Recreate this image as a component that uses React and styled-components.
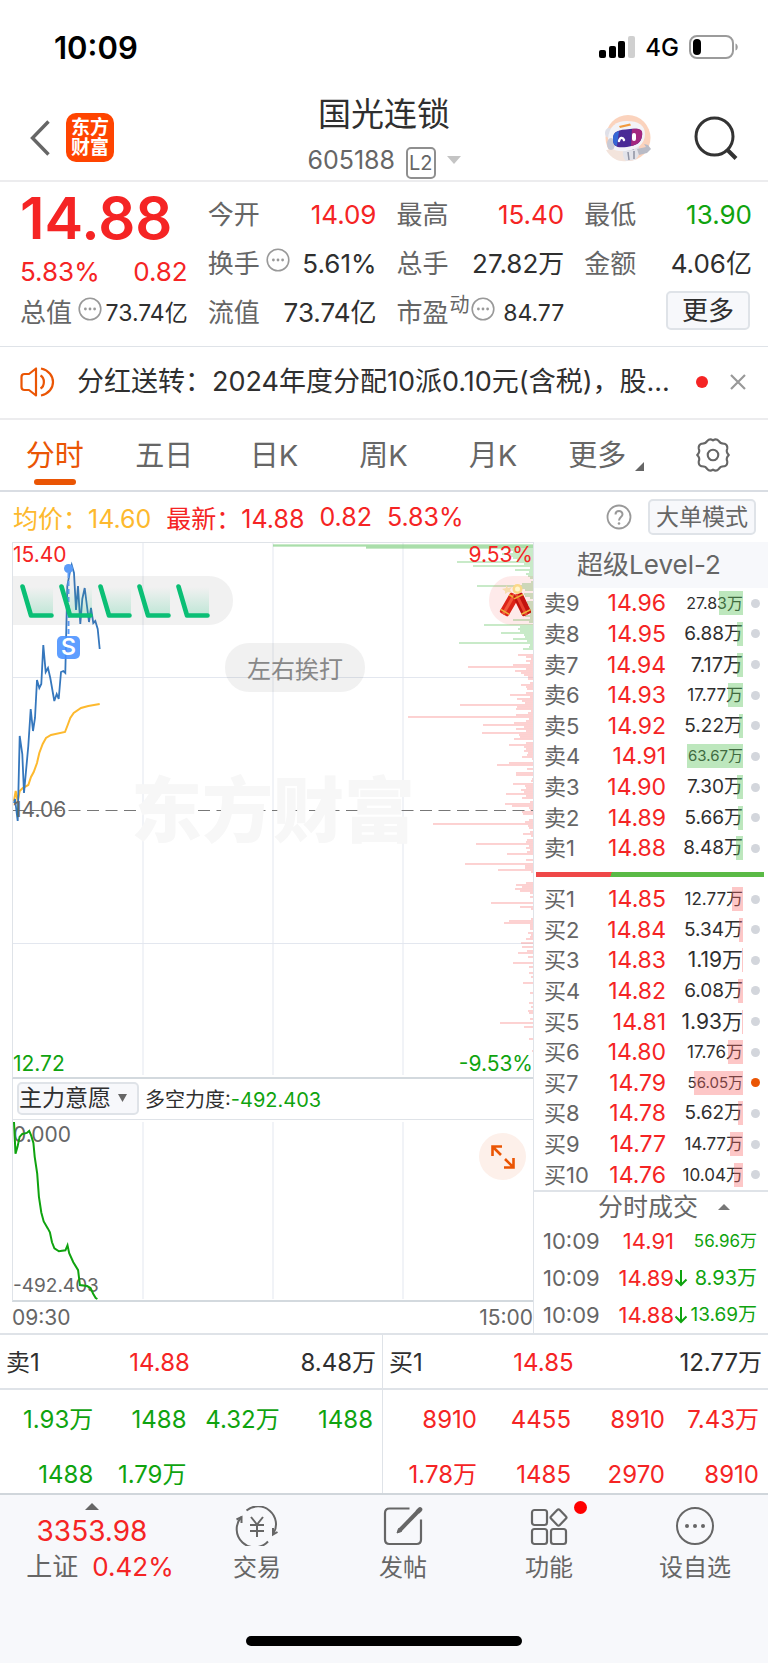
import React from 'react'
import styled, { createGlobalStyle, ThemeProvider } from 'styled-components'

const theme = {
  up: '#f52424',
  down: '#0fa30f',
  brand: '#ea5504',
  text: '#2f2f2f',
  label: '#666666',
  line: '#dfe3e8',
  panel: '#f7f8fb',
  average: '#fdb92e',
}

const GlobalStyle = createGlobalStyle`
  * {
    box-sizing: border-box;
  }

  body {
    margin: 0;
    background: #fff;
    color: #2f2f2f;
    font-family: Inter, 'Noto Sans CJK SC', sans-serif;
  }

  button, select {
    font: inherit;
    color: inherit;
    background: none;
    border: 0;
    padding: 0;
    margin: 0;
    cursor: pointer;
  }

  a {
    color: inherit;
    text-decoration: none;
  }

  svg {
    display: block;
    flex: none;
  }
`

const toneColor = ({ theme, $tone }) => theme[$tone] || theme.text

const Tone = styled.span`
  color: ${toneColor};
`

/* ---------- status bar ---------- */

const StatusBar = styled.div`
  display: flex;
  justify-content: space-between;
  align-items: center;
  height: 94px;
  padding: 0 29px 0 54px;
  color: #000;
`

const Clock = styled.span`
  font-size: 31px;
  font-weight: 600;
`

const StatusIcons = styled.div`
  display: flex;
  align-items: center;
  gap: 10px;
  font-size: 24px;
  font-weight: 500;
`

/* ---------- header ---------- */

const Header = styled.header`
  display: grid;
  grid-template-columns: 1fr auto 1fr;
  align-items: center;
  height: 88px;
  padding: 0 30px;
  border-bottom: 2px solid #ececee;
`

const HeaderSide = styled.div`
  display: flex;
  align-items: center;
  justify-content: ${props => (props.$end ? 'flex-end' : 'flex-start')};
  gap: ${props => (props.$end ? '42px' : '16px')};
  padding-bottom: 4px;
`

const Logo = styled.a`
  display: grid;
  place-content: center;
  width: 48px;
  height: 49px;
  border-radius: 10px;
  background: #ff4400;
  color: #fff;
  font-size: 19px;
  font-weight: 700;
  line-height: 20px;
  text-align: center;
`

const Title = styled.div`
  display: flex;
  flex-direction: column;
  align-items: center;
  gap: 7px;
  padding-bottom: 6px;
`

const StockName = styled.h1`
  margin: 0;
  font-size: 33px;
  font-weight: 400;
  line-height: 40px;
`

const StockCode = styled.button`
  display: flex;
  align-items: center;
  gap: 11px;
  color: ${props => props.theme.label};
  font-size: 25px;
  line-height: 32px;
`

const LevelTag = styled.span`
  margin-top: 6px;
  padding: 0 1px;
  border: 2px solid #8f8f8f;
  border-radius: 5px;
  font-size: 20px;
  line-height: 28px;
`

/* ---------- quote ---------- */

const Quote = styled.section`
  display: grid;
  grid-template-columns: 167fr 168fr 167fr 167fr;
  column-gap: 20px;
  height: 165px;
  padding: 8px 16px 10px 20px;
  border-bottom: 1px solid ${props => props.theme.line};
`

const QuoteColumn = styled.div`
  display: grid;
  grid-template-rows: repeat(3, 49px);
`

const Price = styled.div`
  grid-row: span 2;
  display: flex;
  flex-direction: column;
  justify-content: space-between;
  color: ${props => props.theme.up};
`

const PriceNow = styled.strong`
  font-size: 58px;
  font-weight: 600;
  line-height: 56px;
`

const Between = styled.div`
  display: flex;
  justify-content: space-between;
  align-items: center;
  font-size: 26px;
  line-height: 32px;
  white-space: nowrap;
`

const FieldName = styled.span`
  display: flex;
  align-items: center;
  gap: 6px;
  color: ${props => props.theme.label};
  font-size: 26px;

  svg {
    margin-bottom: 8px;
  }
`

const FieldValue = styled.span`
  color: ${toneColor};
  font-size: ${props => (props.$small ? '23px' : '26px')};
`

const Raised = styled.sup`
  margin: 0 -5px 16px -5px;
  font-size: 20px;
  line-height: 20px;
`

const OutlineButton = styled.button`
  padding: 0 ${props => (props.$wide ? '14px' : '6px')};
  border: 2px solid ${props => props.theme.line};
  border-radius: 5px;
  background: ${props => props.theme.panel};
  color: ${props => (props.$wide ? props.theme.text : props.theme.label)};
  font-size: ${props => (props.$wide ? '26px' : '23px')};
  line-height: ${props => (props.$wide ? '35px' : '32px')};
`

const MoreCell = styled.div`
  display: flex;
  justify-content: flex-end;
  align-items: center;
  padding: 0 2px 4px 0;
`

/* ---------- notice ---------- */

const Notice = styled.section`
  display: flex;
  align-items: center;
  height: 73px;
  padding: 0 22px 2px 20px;
  border-bottom: 2px solid #ececee;
`

const NoticeText = styled.a`
  flex: 1;
  margin-left: 22px;
  white-space: nowrap;
  font-size: 27px;
  line-height: 36px;
`

const Dot = styled.i`
  flex: none;
  width: ${props => props.$size}px;
  height: ${props => props.$size}px;
  border-radius: 50%;
  background: ${props => props.$color};
`

const CloseButton = styled.button`
  margin-left: 22px;
`

/* ---------- tabs ---------- */

const Tabs = styled.nav`
  display: grid;
  grid-template-columns: repeat(6, 109fr) 110fr;
  height: 72px;
  border-bottom: 2px solid #d9dde3;
`

const Tab = styled.button`
  display: flex;
  flex-direction: column;
  align-items: center;
  padding-top: 16px;
  color: ${props => (props.$active ? props.theme.brand : props.theme.label)};
  font-size: 29px;
  line-height: 40px;

  &::after {
    content: '';
    width: 42px;
    height: 6px;
    margin-top: 3px;
    border-radius: 3px;
    background: ${props => (props.$active ? props.theme.brand : 'none')};
  }
`

const TabMore = styled.span`
  display: flex;
  align-items: flex-end;
  gap: 9px;
  padding-left: 7px;

  svg {
    margin-bottom: 5px;
  }
`

/* ---------- info line ---------- */

const Info = styled.div`
  display: flex;
  align-items: center;
  height: 50px;
  padding: 0 12px 0 13px;
  font-size: 25px;
  white-space: pre;
`

const InfoItem = styled.span`
  margin-right: 15px;
  color: ${toneColor};
`

const InfoTools = styled.div`
  display: flex;
  align-items: center;
  gap: 16px;
  margin-left: auto;
`

/* ---------- chart area ---------- */

const Main = styled.main`
  display: grid;
  grid-template-columns: 533fr 235fr;
  border-bottom: 2px solid ${props => props.theme.line};
`

const ChartColumn = styled.div`
  min-width: 0;
  padding-left: 12px;
`

const Plot = styled.div`
  position: relative;
  height: ${props => props.$height}px;
  overflow: hidden;
  border: 1px solid ${props => props.theme.line};
  border-bottom: 2px solid #d3d9de;
  border-right: 0;
`

const PlotSvg = styled.svg`
  width: 100%;
  height: 100%;
`

const PlotLabel = styled.span`
  position: absolute;
  top: ${props => props.$top}px;
  left: ${props => (props.$right ? 'auto' : '0')};
  right: ${props => (props.$right ? '0' : 'auto')};
  color: ${props => props.theme[props.$tone]};
  font-size: ${props => (props.$small ? '19px' : '21px')};
  line-height: 24px;
`

const Watermark = styled.div`
  position: absolute;
  top: 222px;
  left: 0;
  right: 0;
  color: #f7f7f7;
  font-size: 71px;
  font-weight: 900;
  line-height: 90px;
  text-align: center;
`

const Bullet = styled.div`
  position: absolute;
  display: flex;
  align-items: center;
  gap: 5px;
  top: ${props => props.$top}px;
  left: ${props => props.$left};
  right: ${props => props.$right};
  height: 49px;
  padding: ${props => props.$pad};
  border-radius: ${props => props.$radius || '24px'};
  background: ${props => props.$bg || 'rgba(120, 120, 120, 0.1)'};
  color: #888;
  font-size: 24px;
`

const SellMark = styled.span`
  position: absolute;
  top: 93px;
  left: 44px;
  width: 23px;
  border-radius: 5px;
  background: rgba(72, 145, 255, 0.88);
  color: #fff;
  font-size: 23px;
  font-weight: 600;
  line-height: 23px;
  text-align: center;
`

const IndicatorBar = styled.div`
  display: flex;
  align-items: center;
  gap: 6px;
  height: 40px;
  padding: 0 4px 2px;
  border-left: 1px solid ${props => props.theme.line};
  font-size: 20px;
`

const Picker = styled.label`
  display: flex;
  align-items: center;
  height: 33px;
  padding-right: 10px;
  border: 2px solid ${props => props.theme.line};
  border-radius: 5px;
  background: ${props => props.theme.panel};

  select {
    appearance: none;
    width: 99px;
    font-size: 23px;
    line-height: 28px;
  }
`

const ExpandButton = styled.button`
  position: absolute;
  top: 13px;
  right: 7px;
  display: grid;
  place-items: center;
  width: 47px;
  height: 47px;
  border-radius: 50%;
  background: #fdf0ea;
`

const TimeAxis = styled.div`
  display: flex;
  justify-content: space-between;
  align-items: center;
  height: 31px;
  color: ${props => props.theme.label};
  font-size: 21px;
`

/* ---------- order book ---------- */

const BookColumn = styled.aside`
  display: flex;
  flex-direction: column;
  min-width: 0;
  border-left: 1px solid ${props => props.theme.line};
`

const BookTitle = styled.h2`
  margin: 0;
  height: 46px;
  padding-right: 4px;
  background: ${props => props.theme.panel};
  color: ${props => props.theme.label};
  font-size: 26px;
  font-weight: 400;
  line-height: 46px;
  text-align: center;
`

const Book = styled.table`
  display: flex;
  flex: ${props => props.$rows} 1 0;
  padding: 0 8px 0 10px;

  tbody {
    display: grid;
    grid-auto-rows: 1fr;
    width: 100%;
  }

  tr {
    display: flex;
    align-items: center;
    line-height: 26px;
  }

  td, th {
    padding: 0;
    font-weight: 400;
  }
`

const BookSide = styled.th`
  width: 54px;
  color: ${props => props.theme.label};
  font-size: 22px;
  text-align: left;
`

const BookPrice = styled.td`
  width: 68px;
  color: ${props => props.theme.up};
  font-size: 23px;
  text-align: right;
`

const BookVolume = styled.td`
  position: relative;
  flex: 1;
  font-size: ${props => props.$size}px;
  text-align: right;
  white-space: nowrap;
`

const VolumeBar = styled.i`
  position: absolute;
  top: 1px;
  right: 0;
  height: 24px;
  background: ${props => (props.$side === '卖' ? 'rgba(90, 195, 90, 0.4)' : 'rgba(250, 100, 100, 0.36)')};
`

const BookDot = styled.td`
  display: flex;
  padding-left: 8px !important;
`

const Ratio = styled.div`
  display: flex;
  height: 5px;
  margin: 8px 4px 7px 2px;
  background: linear-gradient(110deg, #ef4848 33%, #5aba46 33%);
`

const Deals = styled.section`
  border-top: 2px solid ${props => props.theme.line};
`

const DealsTitle = styled.button`
  display: flex;
  justify-content: center;
  align-items: center;
  gap: 20px;
  width: 100%;
  padding-left: 26px;
  color: ${props => props.theme.label};
  font-size: 25px;
  line-height: 30px;
`

const DealTable = styled.table`
  width: 100%;
  border-spacing: 0;
  font-size: 22px;
  line-height: 36px;

  td {
    padding: 0;
    height: 37px;
    white-space: nowrap;
  }

  td:first-child {
    width: 76px;
    padding-left: 9px;
    color: ${props => props.theme.label};
  }

  td:last-child {
    padding-right: 11px;
  }
`

const DealPrice = styled.td`
  width: 64px;
  color: ${props => props.theme.up};
  text-align: right;
`

const DealVolume = styled.td`
  color: ${props => props.theme.down};
  font-size: ${props => props.$size}px;
  text-align: right;
`

const DealArrow = styled.td`
  width: 14px;
`

/* ---------- best bid and ask queues ---------- */

const Queues = styled.section`
  display: grid;
  grid-template-columns: 382fr 386fr;
`

const Queue = styled.div`
  min-width: 0;
  border-left: ${props => (props.$divided ? `1px solid ${props.theme.line}` : '0')};
`

const QueueHead = styled.div`
  display: grid;
  grid-template-columns: 1fr 1fr 1fr;
  height: 55px;
  padding: 0 6px;
  border-bottom: 2px solid ${props => props.theme.line};
  font-size: 24px;
  line-height: 56px;

  span:last-child {
    text-align: right;
  }
`

const QueueTable = styled.table`
  display: block;
  color: ${toneColor};
  font-size: 24px;
  line-height: 26px;

  tbody {
    display: grid;
    gap: 29px;
    padding: 17px 9px 5px 0;
  }

  tr {
    display: grid;
    grid-template-columns: repeat(4, 1fr);
  }

  td {
    padding: 0;
    text-align: right;
    white-space: nowrap;
  }
`

/* ---------- footer ---------- */

const Footer = styled.footer`
  padding-bottom: 17px;
  border-top: 2px solid #d0d6db;
  background: ${props => props.theme.panel};
  color: ${props => props.theme.label};
`

const FooterNav = styled.nav`
  display: grid;
  grid-template-columns: 184fr repeat(4, 146fr);
  height: 141px;
`

const IndexLink = styled.a`
  display: flex;
  flex-direction: column;
  align-items: center;
  padding-top: 8px;
  font-size: 26px;
  line-height: 36px;
`

const IndexValue = styled.span`
  margin-top: 3px;
  color: ${props => props.theme.up};
  font-size: 28px;
`

const IndexChange = styled.span`
  display: flex;
  gap: 14px;
  padding-left: 16px;
`

const FooterButton = styled.button`
  position: relative;
  display: flex;
  flex-direction: column;
  align-items: center;
  gap: 4px;
  padding-top: 11px;
  font-size: 24px;
  line-height: 36px;
`

const Badge = styled.i`
  position: absolute;
  top: 6px;
  left: calc(50% + 25px);
  width: 13px;
  height: 13px;
  border-radius: 50%;
  background: #f00;
`

const HomeBar = styled.div`
  width: 36%;
  height: 10px;
  margin: 0 auto;
  border-radius: 5px;
  background: #000;
`

/* ---------- drawings ---------- */

const Caret = ({ size = 14, height = 8, up, color = '#c4c4c4' }) => (
  <svg width={size} height={height} viewBox="0 0 14 8" preserveAspectRatio="none">
    <path d={up ? 'M0 8L7 0L14 8Z' : 'M0 0H14L7 8Z'} fill={color} />
  </svg>
)

const DotsIcon = ({ size = 24 }) => (
  <svg width={size} height={size} viewBox="0 0 24 24" fill="#999">
    <circle cx="12" cy="12" r="10.8" fill="none" stroke="#999" strokeWidth="1.6" />
    <circle cx="7.4" cy="12" r="1.4" />
    <circle cx="12" cy="12" r="1.4" />
    <circle cx="16.6" cy="12" r="1.4" />
  </svg>
)

const SignalIcon = () => (
  <svg width="36" height="22" viewBox="0 0 36 22">
    <rect x="0" y="14" width="7" height="8" rx="2" />
    <rect x="10" y="10" width="7" height="12" rx="2" />
    <rect x="19" y="5" width="7" height="17" rx="2" />
    <rect x="29" y="0" width="7" height="22" rx="2" fill="#d0d0d0" />
  </svg>
)

const BatteryIcon = () => (
  <svg width="50" height="24" viewBox="0 0 50 24">
    <rect x="1" y="1" width="43" height="22" rx="7" fill="none" stroke="#9b9b9b" strokeWidth="2" />
    <rect x="4" y="4" width="8" height="16" rx="4" />
    <path d="M46.500 8.500C49.500 9.500 49.500 14.500 46.500 15.500Z" fill="#9b9b9b" />
  </svg>
)

const RobotIcon = () => (
  <svg width="48" height="48" viewBox="0 0 48 48">
    <ellipse cx="24" cy="24" rx="22.500" ry="23" fill="#fbd3bd" />
    <path d="M2 36C8 46 16 48 23 47L18 34Z" fill="#f3e4dc" />
    <path d="M21 32L33 30C37 34 36 42 31 46L22 47C18 43 18 37 21 32Z" fill="#e2e3ea" />
    <path d="M33 35L42 33L40 30L44 31L47 35L43 39L35 41Z" fill="#b9bbc6" />
    <path d="M21 36L30 35M24 38L25 46M30 37V45" stroke="#8f93a3" strokeWidth="1.500" fill="none" />
    <ellipse cx="5" cy="19" rx="4" ry="5" fill="#dfe0e8" />
    <path d="M4 25C5 12 12 7 23 7C34 7 41 11 41 20C41 30 33 36 22 37C10 38 4 34 4 25Z" fill="#f3f3f7" />
    <ellipse cx="7" cy="30" rx="4" ry="6" fill="#c8cad5" />
    <path d="M15 12L26 9.500L27 11.500L16 14Z" fill="#f19a3e" />
    <path d="M9 25C9 17 14 16 26 15C36 14 39 16 38 22C37 29 33 31 23 33C13 34 9 33 9 25Z" fill="#4a2a96" />
    <path d="M28 15C37 14 39 16 38 22C37 28 33 31 27 32Z" fill="#a3277f" />
    <path d="M9 25C9 20 11 18 15 17L13 32C10 31 9 29 9 25Z" fill="#3467d6" />
    <path d="M15 27C16 23 19 23 20 26" stroke="#fff" strokeWidth="2.400" fill="none" strokeLinecap="round" />
    <rect x="28" y="19" width="4" height="8" rx="2" fill="#fff" />
  </svg>
)

const SearchIcon = () => (
  <svg width="44" height="44" viewBox="0 0 44 44" fill="none" stroke="#333" strokeWidth="3">
    <circle cx="20.500" cy="20.500" r="18.500" />
    <path d="M33.500 34L42 42.500" strokeWidth="4" />
  </svg>
)

const SpeakerIcon = () => (
  <svg width="35" height="30" viewBox="0 0 35 30" fill="none" stroke="#ea5504" strokeWidth="2.200" strokeLinejoin="round">
    <path d="M16 1.500V28.500L9 23H4.500Q1.500 23 1.500 20V10Q1.500 7 4.500 7H9Z" />
    <path d="M20.500 8.500C25 11 25 19 20.500 21.500M21 1.500C37 5 37 25 21 28.500" />
  </svg>
)

const GearIcon = () => (
  <svg width="36" height="38" viewBox="0 -1 34 36" fill="none" stroke="#666" strokeWidth="2" strokeLinejoin="round">
    <path d="M11.500 3.800Q14 1 17 3.200Q20 1 22.500 3.800Q24 6.500 28 6.300Q31 7.500 30.500 11Q29 14 32 17Q29 20 30.500 23Q31 26.500 28 27.700Q24 27.500 22.500 30.200Q20 33 17 30.800Q14 33 11.500 30.200Q10 27.500 6 27.700Q3 26.500 3.500 23Q5 20 2 17Q5 14 3.500 11Q3 7.500 6 6.300Q10 6.500 11.500 3.800Z" />
    <circle cx="17" cy="17" r="5" />
  </svg>
)

const HelpIcon = () => (
  <svg width="26" height="26" viewBox="0 0 26 26" fill="none" stroke="#999" strokeWidth="2">
    <circle cx="13" cy="13" r="11.500" strokeWidth="1.800" />
    <path d="M9.500 10.500C9.500 6 16.500 6 16.500 10.300C16.500 13 13 13 13 16.500" />
    <circle cx="13" cy="19.500" r="1.300" fill="#999" stroke="none" />
  </svg>
)

const FallIcon = () => (
  <svg width="34" height="34" viewBox="0 0 34 34">
    <defs>
      <linearGradient id="fall" x1="0" y1="0" x2="0" y2="1">
        <stop offset="0" stopColor="#0abf75" stopOpacity="0" />
        <stop offset="1" stopColor="#0abf75" stopOpacity="0.22" />
      </linearGradient>
    </defs>
    <path d="M2 3H33V32H11Z" fill="url(#fall)" />
    <path d="M2.500 2.500L11 31.500H31.500" fill="none" stroke="#0abf75" strokeWidth="4.600" strokeLinecap="round" strokeLinejoin="round" />
  </svg>
)

const FirecrackerIcon = () => (
  <svg width="32" height="34" viewBox="0 0 32 34">
    <path d="M7 1L9 4L13 3L11 6L13 9L9 8L6 10L6 7L3 5L7 4Z" fill="#f7dcae" />
    <g transform="rotate(30 10 21)">
      <rect x="5" y="9" width="10" height="23" rx="2" fill="#dd2418" />
      <rect x="8" y="9" width="3" height="23" fill="#f2573c" />
      <path d="M5 12H15M5 29H15" stroke="#eeb13a" strokeWidth="1.600" />
    </g>
    <g transform="rotate(-26 23 21)">
      <rect x="18.500" y="9" width="10" height="23" rx="2" fill="#c3130f" />
      <rect x="21" y="9" width="3" height="23" fill="#ea4330" />
      <path d="M18.500 12H28.500M18.500 29H28.500" stroke="#eeb13a" strokeWidth="1.600" />
    </g>
    <circle cx="18.500" cy="5" r="5" fill="#fbd98a" />
    <circle cx="18.500" cy="5" r="2.500" fill="#fff6cf" />
  </svg>
)

const ExpandIcon = () => (
  <svg width="26" height="26" viewBox="0 0 26 26" fill="none" stroke="#ea5504" strokeWidth="2.600">
    <path d="M2.500 12V2.500H12M3 3L11 11M23.500 14V23.500H14M23 23L15 15" />
  </svg>
)

const TradeIcon = () => (
  <svg width="44" height="40" viewBox="0 0 44 40" fill="none" stroke="#666" strokeWidth="2">
    <path d="M11.500 4.500A18 18 0 0 1 38.500 27.500M33 35.500A18 18 0 0 1 6.500 11" />
    <path d="M1.500 13.500L6.500 11V17M42.500 26L38 28.500V22" />
    <path d="M16 11L22 18.500L28 11M15 19H29M15 25H29M22 18.500V31" />
  </svg>
)

const PostIcon = () => (
  <svg width="40" height="40" viewBox="0 0 40 40" fill="none" stroke="#666" strokeWidth="2.200">
    <path d="M26.500 2.500H6.500Q2 2.500 2 7V33.500Q2 38 6.500 38H33.500Q38 38 38 33.500V13.500" />
    <path d="M17 24L34 6.500" strokeWidth="4" />
    <path d="M35 5.500L37 3.500" strokeWidth="4.600" strokeLinecap="round" />
    <path d="M14 27L18.500 25.500L15.500 22.500Z" fill="#666" strokeWidth="1" />
  </svg>
)

const FeaturesIcon = () => (
  <svg width="38" height="40" viewBox="0 0 38 40" fill="none" stroke="#666" strokeWidth="2.200">
    <rect x="2" y="4" width="15" height="15" rx="2.500" />
    <rect x="2" y="23" width="15" height="15" rx="2.500" />
    <rect x="21" y="23" width="15" height="15" rx="2.500" />
    <path d="M27.200 4Q28.500 2.700 29.800 4L36 10.500Q37 11.500 36 12.500L29.800 19Q28.500 20.300 27.200 19L21 12.500Q20 11.500 21 10.500Z" />
  </svg>
)

const MoreIcon = () => (
  <svg width="40" height="40" viewBox="0 0 40 40" fill="#666">
    <circle cx="20" cy="20" r="18" fill="none" stroke="#666" strokeWidth="2" />
    <circle cx="12" cy="20" r="2" />
    <circle cx="20" cy="20" r="2" />
    <circle cx="28" cy="20" r="2" />
  </svg>
)

/* ---------- data ---------- */

const columns = [
  [
    { name: '今开', value: '14.09', tone: 'up' },
    { name: '换手', value: '5.61%', dots: true },
    { name: '流值', value: '73.74亿' },
  ],
  [
    { name: '最高', value: '15.40', tone: 'up' },
    { name: '总手', value: '27.82万' },
    { name: '市盈', value: '84.77', raised: '动', dots: true, small: true },
  ],
  [
    { name: '最低', value: '13.90', tone: 'down' },
    { name: '金额', value: '4.06亿' },
  ],
]

const tabs = ['分时', '五日', '日K', '周K', '月K']

// level, price, volume, volume font size, bar width
const asks = [
  ['9', '14.96', '27.83万', 16, 24],
  ['8', '14.95', '6.88万', 19, 6],
  ['7', '14.94', '7.17万', 20, 6],
  ['6', '14.93', '17.77万', 17, 15],
  ['5', '14.92', '5.22万', 19, 4],
  ['4', '14.91', '63.67万', 15, 56],
  ['3', '14.90', '7.30万', 19, 6],
  ['2', '14.89', '5.66万', 19, 5],
  ['1', '14.88', '8.48万', 19, 7],
]

const bids = [
  ['1', '14.85', '12.77万', 17, 11],
  ['2', '14.84', '5.34万', 19, 4],
  ['3', '14.83', '1.19万', 21, 1],
  ['4', '14.82', '6.08万', 19, 5],
  ['5', '14.81', '1.93万', 21, 1],
  ['6', '14.80', '17.76万', 17, 15],
  ['7', '14.79', '56.05万', 15, 49],
  ['8', '14.78', '5.62万', 19, 5],
  ['9', '14.77', '14.77万', 17, 13],
  ['10', '14.76', '10.04万', 17, 9],
]

const deals = [
  ['10:09', '14.91', '56.96万', 17, false],
  ['10:09', '14.89', '8.93万', 20, true],
  ['10:09', '14.88', '13.69万', 19, true],
]

const askQueue = [['1.93万', '1488', '4.32万', '1488'], ['1488', '1.79万', '', '']]
const bidQueue = [['8910', '4455', '8910', '7.43万'], ['1.78万', '1485', '2970', '8910']]

const pricePoints =
  '1,260 2,256 4.7,278 6.7,193 9.3,211 11,250 15.3,203 17.7,166 20,188 22,175 24,137 26.3,145 28.3,141 30.3,102 32.7,129 35,125 37.3,135 41.3,158 43.7,151 45.7,156 48,129 50.3,128 52.3,130 54.3,43 56.7,30 58.7,22 61,30 63,67 65,43 67.3,81 69.3,56 71.7,45 73.7,61 76,79 78,65 80.3,80 82.3,78 84.7,86 86.7,106'

const averagePoints =
  '1,258 2.7,248 4.7,258 6.7,248 9.7,245 15.3,242 18,234 20.7,229 24,220 26.3,210 29.7,201 33,195 38,192 52,189 54.7,182 57.3,175 60.7,170 68,165 75.3,163 86.7,161'

const forcePoints =
  '1,2 2.5,34 4.5,27 6.6,17 9.3,14 13.8,13 16.2,11 18.3,16 20.4,23 21.7,37 24.2,54 25.9,77 28.3,93 30.7,102 34.8,109 36.9,113 39,123 41.4,129 45.9,132 52.4,131 54.5,126 56.2,134 60.3,143 65.1,151 66.9,166 74.1,167 77.5,169 80.3,175 82.7,179 84.4,180'

// pending orders per price: [y, length]
const askDepth = [
  [2, 260], [3, 260], [4, 167], [5, 167], [7, 25], [9, 20], [11, 31], [13, 22], [15, 20], [17, 16], [19, 76], [21, 9],
  [23, 60], [25, 3], [27, 18], [29, 4], [31, 7], [33, 5], [35, 3], [39, 2], [41, 11], [43, 56], [45, 16], [47, 8],
  [51, 9], [53, 8], [55, 3], [59, 6], [61, 8], [63, 4], [65, 8], [67, 6], [69, 4], [71, 3], [73, 8], [75, 3],
  [77, 20], [79, 4], [82, 49], [84, 13], [86, 15], [88, 13], [90, 32], [92, 9], [94, 8], [96, 20], [98, 6],
  [100, 74], [102, 3], [104, 4], [106, 10],
]

const bidDepth = [
  [112, 15], [114, 7], [116, 2], [118, 7], [120, 3], [122, 20], [124, 65], [126, 7], [128, 18], [130, 12], [132, 9],
  [134, 5], [136, 5], [140, 3], [142, 12], [144, 7], [146, 6], [150, 7], [152, 23], [154, 3], [156, 16], [158, 11],
  [160, 8], [162, 73], [164, 16], [166, 17], [168, 2], [170, 5], [172, 17], [174, 125], [176, 4], [178, 7],
  [180, 19], [182, 50], [184, 9], [186, 17], [188, 7], [190, 51], [192, 14], [194, 13], [196, 19], [200, 7],
  [202, 24], [204, 9], [206, 7], [208, 9], [210, 5], [212, 6], [214, 11], [216, 1], [220, 24], [222, 36], [226, 6],
  [230, 17], [232, 17], [236, 1], [238, 2], [241, 20], [243, 8], [245, 7], [247, 12], [249, 9], [251, 27], [253, 7],
  [255, 11], [259, 3], [261, 28], [263, 21], [265, 4], [267, 3], [269, 11], [271, 10], [277, 4], [279, 8],
  [281, 100], [283, 5], [285, 4], [289, 3], [291, 10], [293, 2], [297, 6], [299, 7], [301, 57], [303, 4], [305, 7],
  [307, 3], [309, 6], [311, 26], [317, 7], [321, 68], [323, 8], [325, 8], [327, 35], [329, 2], [340, 7], [342, 17],
  [344, 11], [346, 18], [348, 13], [350, 3], [354, 3], [360, 42], [364, 13], [366, 2], [376, 2], [378, 24],
  [380, 29], [382, 3], [384, 3], [386, 3], [390, 5], [392, 2], [394, 3], [396, 7], [400, 12], [404, 11], [408, 6],
  [410, 15], [414, 5], [420, 20], [424, 4], [430, 4], [434, 2], [440, 10], [450, 3], [460, 4], [464, 2], [468, 5],
  [470, 4], [476, 3], [480, 33], [484, 9], [496, 4], [508, 1],
]

const depthPath = depth => depth.map(([y, length]) => `M${520 - length} ${y}H520`).join('')

/* ---------- parts ---------- */

const QuoteField = ({ field }) => (
  <Between>
    <FieldName>
      {field.name}
      {field.raised && <Raised>{field.raised}</Raised>}
      {field.dots && <DotsIcon />}
    </FieldName>
    <FieldValue $tone={field.tone} $small={field.small}>{field.value}</FieldValue>
  </Between>
)

const BookRows = ({ side, rows }) => (
  <Book $rows={rows.length}>
    <tbody>
      {rows.map(([level, price, volume, size, bar]) => (
        <tr key={level}>
          <BookSide scope="row">{side}{level}</BookSide>
          <BookPrice>{price}</BookPrice>
          <BookVolume $size={size}>
            {volume}
            <VolumeBar $side={side} style={{ width: bar }} />
          </BookVolume>
          <BookDot>
            <Dot $size={9} $color={side === '买' && level === '7' ? '#ea5504' : '#d3d6dc'} />
          </BookDot>
        </tr>
      ))}
    </tbody>
  </Book>
)

const QueuePanel = ({ name, price, volume, rows, tone, divided }) => (
  <Queue $divided={divided}>
    <QueueHead>
      <span>{name}</span>
      <Tone $tone="up">{price}</Tone>
      <span>{volume}</span>
    </QueueHead>
    <QueueTable $tone={tone}>
      <tbody>
        {rows.map((row, i) => (
          <tr key={i}>
            {row.map((cell, j) => <td key={j}>{cell}</td>)}
          </tr>
        ))}
      </tbody>
    </QueueTable>
  </Queue>
)

const PriceChart = () => (
  <Plot $height={537}>
    <Watermark>东方财富</Watermark>
    <PlotSvg viewBox="0 0 520 534" preserveAspectRatio="none" fill="none">
      <path d="M130 0V532M260 0V532M390 0V532M0 134.500H520M0 400.500H520" stroke="#e3e7ef" />
      <path d={depthPath(askDepth)} stroke="#86d086" opacity="0.9" />
      <path d={depthPath(bidDepth)} stroke="#fa9a9a" opacity="0.9" />
      <path d="M0 267.500H520" stroke="#777" strokeWidth="1.200" strokeDasharray="12 6.500" />
      <polyline points={averagePoints} stroke="#fdb92e" strokeWidth="2" />
      <polyline points={pricePoints} stroke="#3577bd" strokeWidth="1.800" />
      <path d="M55.500 30V94" stroke="#5b9cf8" strokeWidth="2" strokeDasharray="5 3" />
      <circle cx="55.500" cy="25.500" r="4.500" fill="#5b9cf8" />
    </PlotSvg>
    <PlotLabel $top={0} $tone="up">15.40</PlotLabel>
    <PlotLabel $top={0} $tone="up" $right>9.53%</PlotLabel>
    <PlotLabel $top={255} $tone="label">14.06</PlotLabel>
    <PlotLabel $top={509} $tone="down">12.72</PlotLabel>
    <PlotLabel $top={509} $tone="down" $right>-9.53%</PlotLabel>
    <SellMark>S</SellMark>
    <Bullet $top={33} $left="0" $pad="0 23px 0 7px" $radius="0 24px 24px 0">
      {[0, 1, 2, 3, 4].map(i => <FallIcon key={i} />)}
    </Bullet>
    <Bullet $top={100} $left="212px" $pad="0 22px">左右挨打</Bullet>
    <Bullet $top={33} $right="0" $pad="0 2px 0 10px" $radius="24px 0 0 24px" $bg="rgba(245, 80, 80, 0.12)">
      <FirecrackerIcon />
    </Bullet>
  </Plot>
)

const Overlay = styled(PlotSvg)`
  position: absolute;
  inset: 0;
`

const ForceChart = () => (
  <Plot $height={183}>
    <PlotSvg viewBox="0 0 520 180" preserveAspectRatio="none" fill="none">
      <path d="M130 2V179M260 2V179M390 2V179" stroke="#e3e7ef" />
    </PlotSvg>
    <PlotLabel $top={3} $tone="label">0.000</PlotLabel>
    <PlotLabel $top={154} $tone="label" $small>-492.403</PlotLabel>
    <Overlay viewBox="0 0 520 181" preserveAspectRatio="none" fill="none">
      <polyline points={forcePoints} stroke="#0fa30f" strokeWidth="2" />
    </Overlay>
    <ExpandButton aria-label="全屏"><ExpandIcon /></ExpandButton>
  </Plot>
)

export default function App() {
  return (
    <ThemeProvider theme={theme}>
      <GlobalStyle />

      <StatusBar>
        <Clock>10:09</Clock>
        <StatusIcons>
          <SignalIcon />
          4G
          <BatteryIcon />
        </StatusIcons>
      </StatusBar>

      <Header>
        <HeaderSide>
          <button aria-label="返回">
            <svg width="20" height="36" viewBox="0 0 20 36" fill="none" stroke="#666" strokeWidth="3.400">
              <path d="M18.500 1.500L2.500 18L18.500 34.500" />
            </svg>
          </button>
          <Logo href="#">东方<br />财富</Logo>
        </HeaderSide>
        <Title>
          <StockName>国光连锁</StockName>
          <StockCode>
            605188
            <LevelTag>L2</LevelTag>
            <Caret />
          </StockCode>
        </Title>
        <HeaderSide $end>
          <button aria-label="智能助手"><RobotIcon /></button>
          <button aria-label="搜索"><SearchIcon /></button>
        </HeaderSide>
      </Header>

      <Quote>
        <QuoteColumn>
          <Price>
            <PriceNow>14.88</PriceNow>
            <Between>
              <span>5.83%</span>
              <span>0.82</span>
            </Between>
          </Price>
          <QuoteField field={{ name: '总值', value: '73.74亿', dots: true, small: true }} />
        </QuoteColumn>
        {columns.map((fields, i) => (
          <QuoteColumn key={i}>
            {fields.map(field => <QuoteField key={field.name} field={field} />)}
            {fields.length < 3 && (
              <MoreCell><OutlineButton $wide>更多</OutlineButton></MoreCell>
            )}
          </QuoteColumn>
        ))}
      </Quote>

      <Notice>
        <SpeakerIcon />
        <NoticeText href="#">分红送转：2024年度分配10派0.10元(含税)，股...</NoticeText>
        <Dot $size={12} $color="#f52424" />
        <CloseButton aria-label="关闭">
          <svg width="16" height="16" viewBox="0 0 16 16" stroke="#999" strokeWidth="2.200">
            <path d="M1 1L15 15M15 1L1 15" />
          </svg>
        </CloseButton>
      </Notice>

      <Tabs>
        {tabs.map((tab, i) => <Tab key={tab} $active={i === 0}>{tab}</Tab>)}
        <Tab>
          <TabMore>
            更多
            <svg width="9" height="9" viewBox="0 0 9 9"><path d="M9 0V9H0Z" fill="#666" /></svg>
          </TabMore>
        </Tab>
        <Tab aria-label="设置"><GearIcon /></Tab>
      </Tabs>

      <Info>
        <InfoItem $tone="average">均价：14.60</InfoItem>
        <InfoItem $tone="up">最新：14.88</InfoItem>
        <InfoItem $tone="up">0.82</InfoItem>
        <InfoItem $tone="up">5.83%</InfoItem>
        <InfoTools>
          <button aria-label="帮助"><HelpIcon /></button>
          <OutlineButton>大单模式</OutlineButton>
        </InfoTools>
      </Info>

      <Main>
        <ChartColumn>
          <PriceChart />
          <IndicatorBar>
            <Picker>
              <select aria-label="指标" defaultValue="主力意愿">
                <option>主力意愿</option>
              </select>
              <Caret size={9} height={8} color="#666" />
            </Picker>
            <span>多空力度:<Tone $tone="down">-492.403</Tone></span>
          </IndicatorBar>
          <ForceChart />
          <TimeAxis>
            <span>09:30</span>
            <span>15:00</span>
          </TimeAxis>
        </ChartColumn>

        <BookColumn>
          <BookTitle>超级Level-2</BookTitle>
          <BookRows side="卖" rows={asks} />
          <Ratio />
          <BookRows side="买" rows={bids} />
          <Deals>
            <DealsTitle>
              分时成交
              <Caret up size={12} height={6} color="#777" />
            </DealsTitle>
            <DealTable>
              <tbody>
                {deals.map(([time, price, volume, size, fell]) => (
                  <tr key={price}>
                    <td>{time}</td>
                    <DealPrice>{price}</DealPrice>
                    <DealArrow>
                      {fell && (
                        <svg width="14" height="18" viewBox="0 0 14 18" fill="none" stroke="#0fa30f" strokeWidth="2">
                          <path d="M7 1V16M1.500 10.500L7 16L12.500 10.500" />
                        </svg>
                      )}
                    </DealArrow>
                    <DealVolume $size={size}>{volume}</DealVolume>
                  </tr>
                ))}
              </tbody>
            </DealTable>
          </Deals>
        </BookColumn>
      </Main>

      <Queues>
        <QueuePanel name="卖1" price="14.88" volume="8.48万" rows={askQueue} tone="down" />
        <QueuePanel name="买1" price="14.85" volume="12.77万" rows={bidQueue} tone="up" divided />
      </Queues>

      <Footer>
        <FooterNav>
          <IndexLink href="#">
            <Caret up size={14} height={7} color="#666" />
            <IndexValue>3353.98</IndexValue>
            <IndexChange>
              上证
              <Tone $tone="up">0.42%</Tone>
            </IndexChange>
          </IndexLink>
          <FooterButton><TradeIcon />交易</FooterButton>
          <FooterButton><PostIcon />发帖</FooterButton>
          <FooterButton><FeaturesIcon /><Badge />功能</FooterButton>
          <FooterButton><MoreIcon />设自选</FooterButton>
        </FooterNav>
        <HomeBar />
      </Footer>
    </ThemeProvider>
  )
}
